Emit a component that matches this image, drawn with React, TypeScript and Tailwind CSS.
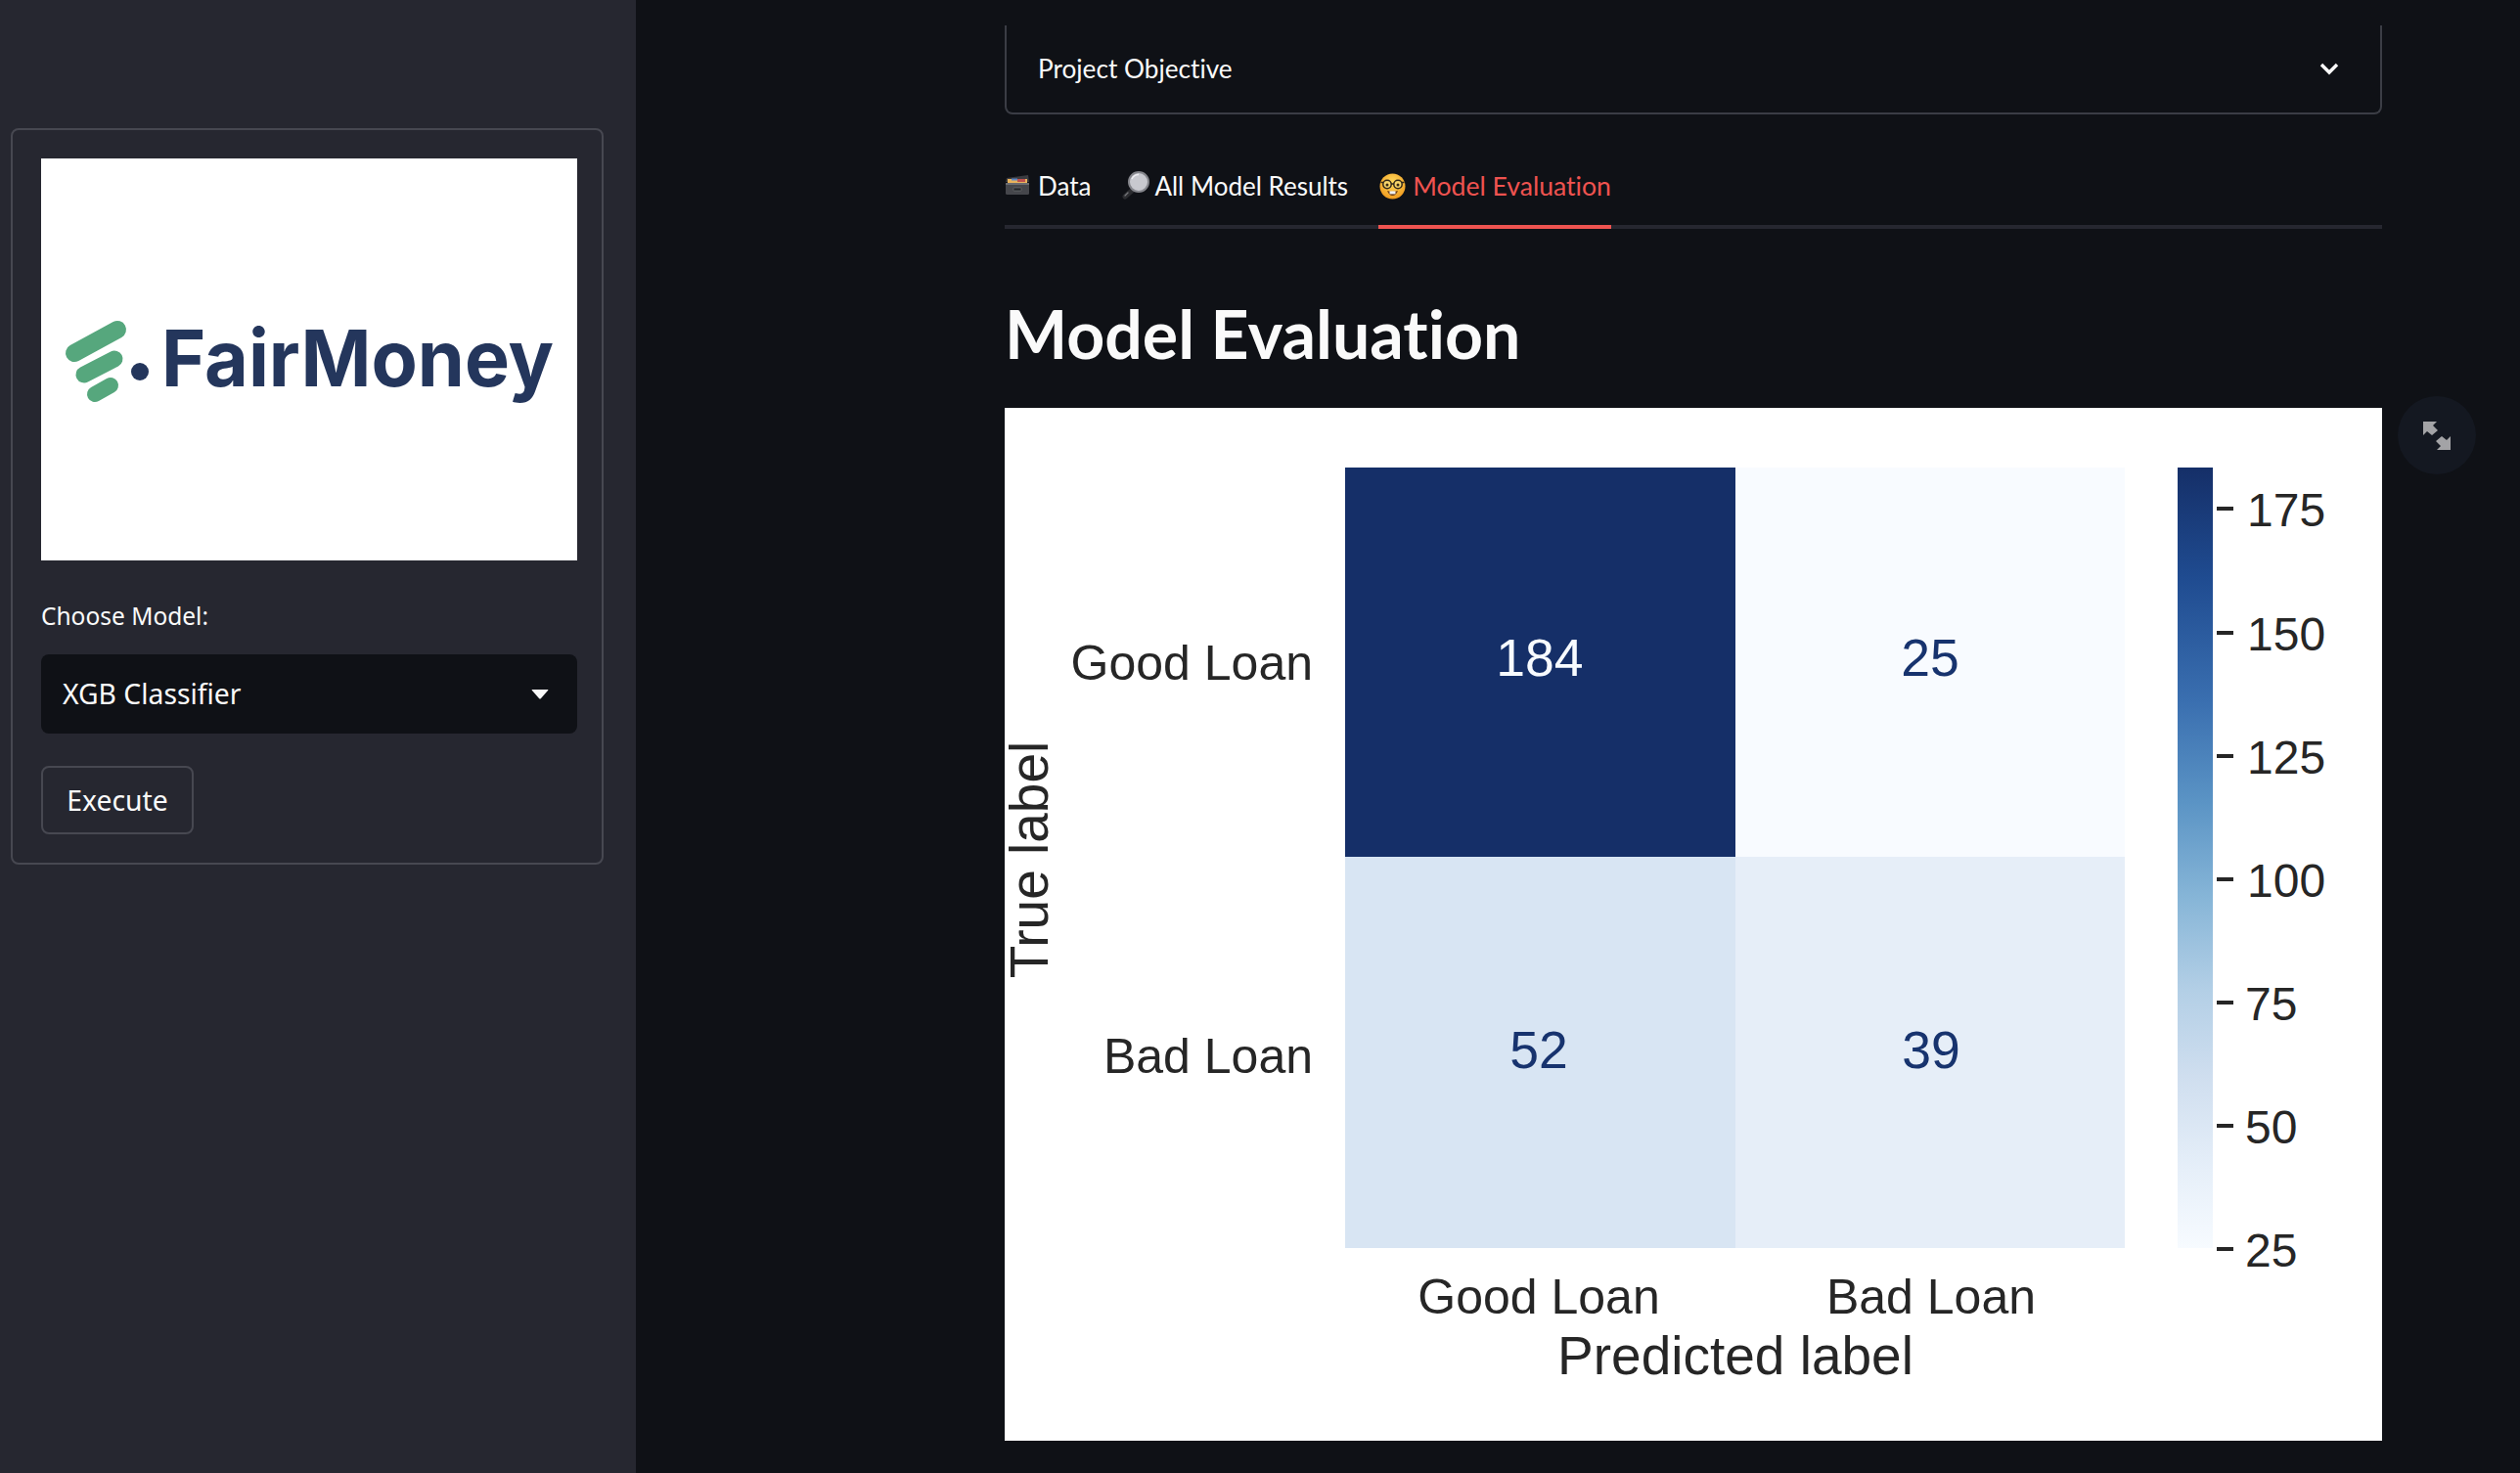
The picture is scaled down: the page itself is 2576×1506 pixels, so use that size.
const sans = "font-['Lato',sans-serif] [font-variant-ligatures:none]";
const ui = "font-['Noto_Sans',sans-serif]";

function FileBoxEmoji() {
  return (
    <svg className="mt-[5px]" width="26" height="22" viewBox="0 0 26 22">
      <path d="M2 4 L24 1 L25 8 L1 8 Z" fill="#3a3b40" />
      <rect x="3" y="5" width="20" height="6" fill="#e9b35c" />
      <rect x="13" y="5" width="8" height="3" fill="#c0504d" />
      <rect x="7" y="4.5" width="6" height="2" fill="#5c86c4" />
      <rect x="1" y="9" width="24" height="12" rx="1.5" fill="#45464b" />
      <rect x="1" y="9" width="24" height="2" fill="#6a6b70" />
      <rect x="9" y="14" width="8" height="3" rx="0.5" fill="#232428" stroke="#77787c" strokeWidth="0.6" />
    </svg>
  );
}

function MagnifierEmoji() {
  return (
    <svg className="mt-[2px]" width="28" height="29" viewBox="0 0 28 29">
      <path d="M11 19 L3 26" stroke="#2b2c30" strokeWidth="5" strokeLinecap="round" />
      <path d="M3 25 L6 22" stroke="#77787c" strokeWidth="1.2" strokeLinecap="round" />
      <circle cx="17" cy="11" r="10" fill="#c8c9cf" stroke="#85868c" strokeWidth="2" />
      <path d="M10 8 A8 8 0 0 1 17 3.5" stroke="#eeeef2" strokeWidth="1.4" fill="none" />
    </svg>
  );
}

function NerdEmoji() {
  return (
    <svg className="mt-[4px]" width="27" height="27" viewBox="0 0 27 27">
      <defs>
        <radialGradient id="nerdFace" cx="50%" cy="35%" r="65%">
          <stop offset="0%" stopColor="#ffdc5e" />
          <stop offset="100%" stopColor="#f09a1e" />
        </radialGradient>
      </defs>
      <circle cx="13.5" cy="13.5" r="13" fill="url(#nerdFace)" />
      <circle cx="8" cy="11.5" r="4.2" fill="#f7d56a" stroke="#33291a" strokeWidth="1.5" />
      <circle cx="19" cy="11.5" r="4.2" fill="#f7d56a" stroke="#33291a" strokeWidth="1.5" />
      <path d="M12 11 H15 M1.5 9.5 H4 M23 9.5 H25.5" stroke="#33291a" strokeWidth="1.3" />
      <circle cx="8" cy="12" r="1.5" fill="#3a2a14" />
      <circle cx="19" cy="12" r="1.5" fill="#3a2a14" />
      <path d="M8 18 Q13.5 20 19 18 Q17 23 13.5 23 Q10 23 8 18 Z" fill="#6b3a14" />
      <rect x="10.5" y="18.4" width="6" height="3" fill="#f2f2f2" />
    </svg>
  );
}

function Logo() {
  return (
    <svg className="h-full w-full" viewBox="0 0 548 411">
      <g stroke="#56a77d" strokeLinecap="round" fill="none">
        <path d="M34 199 L78 175" strokeWidth="18" />
        <path d="M44 221 L75 205" strokeWidth="17" />
        <path d="M55 241 L71 232" strokeWidth="16" />
      </g>
      <circle cx="101" cy="218" r="9" fill="#24365c" />
      <text
        x="123"
        y="233"
        fill="#24365c"
        fontFamily="Inter, sans-serif"
        fontWeight="700"
        fontSize="80"
        textLength="401"
        lengthAdjust="spacingAndGlyphs"
      >
        FairMoney
      </text>
    </svg>
  );
}

const colorbarTicks = [
  { label: "175", y: 103 },
  { label: "150", y: 230 },
  { label: "125", y: 356 },
  { label: "100", y: 482 },
  { label: "75", y: 608 },
  { label: "50", y: 734 },
  { label: "25", y: 860 },
];

function ConfusionMatrix() {
  return (
    <svg
      className="block h-[1056px] w-[1408px] bg-white"
      viewBox="0 0 1408 1056"
      fontFamily="'Liberation Sans', Arial, sans-serif"
      fill="#262626"
    >
      <defs>
        <linearGradient id="blues" x1="0" y1="0" x2="0" y2="1">
          <stop offset="0%" stopColor="#152f68" />
          <stop offset="14%" stopColor="#1f4b90" />
          <stop offset="30%" stopColor="#3a6fb0" />
          <stop offset="43%" stopColor="#5b94c5" />
          <stop offset="55%" stopColor="#86b5d7" />
          <stop offset="67%" stopColor="#b3cfe6" />
          <stop offset="78%" stopColor="#cfdeef" />
          <stop offset="90%" stopColor="#e6eff9" />
          <stop offset="100%" stopColor="#f7fbff" />
        </linearGradient>
      </defs>

      <rect x="348" y="61" width="399" height="398" fill="#152f68" />
      <rect x="747" y="61" width="398" height="398" fill="#f8fbff" />
      <rect x="348" y="459" width="399" height="400" fill="#d8e5f3" />
      <rect x="747" y="459" width="398" height="400" fill="#e6eef8" />

      <g fontSize="53.5" textAnchor="middle" fill="#17336e">
        <text x="547" y="274" fill="#f7fbff">184</text>
        <text x="946" y="274">25</text>
        <text x="546" y="675">52</text>
        <text x="947" y="675">39</text>
      </g>

      <g fontSize="50" textAnchor="end">
        <text x="315" y="278">Good Loan</text>
        <text x="315" y="680">Bad Loan</text>
      </g>
      <g fontSize="50" textAnchor="middle">
        <text x="546" y="926">Good Loan</text>
        <text x="947" y="926">Bad Loan</text>
      </g>
      <text x="747" y="988" fontSize="55" textAnchor="middle">Predicted label</text>
      <text transform="translate(44 462) rotate(-90)" fontSize="55" textAnchor="middle">True label</text>

      <rect x="1199" y="61" width="36" height="798" fill="url(#blues)" />
      {colorbarTicks.map((tick) => (
        <g key={tick.label}>
          <rect x="1239" y={tick.y - 2} width="17" height="4" fill="#262626" />
          <text x={tick.label.length === 3 ? 1270 : 1268} y={tick.y + 18} fontSize="48">
            {tick.label}
          </text>
        </g>
      ))}
    </svg>
  );
}

export default function App() {
  return (
    <div className="flex h-screen overflow-hidden bg-[#0f1116] text-[#fafafa]">
      <aside className={`w-[650px] shrink-0 bg-[#262730] pl-[11px] pr-[33px] pt-[131px] ${ui}`}>
        <div className="h-[753px] rounded-[8px] border-2 border-[#474851] pl-[29px] pr-[25px] pt-[29px]">
          <div className="h-[411px] bg-white">
            <Logo />
          </div>
          <label className="mt-[41px] block text-[24.5px] leading-[32px]">Choose Model:</label>
          <div className="mt-[23px] flex h-[81px] items-center justify-between rounded-[8px] bg-[#0f1116] pl-[22px] pr-[29px]">
            <span className="text-[28.3px]">XGB Classifier</span>
            <svg width="18" height="10" viewBox="0 0 18 10">
              <path d="M1 0 H17 Q18 0 17 1 L10 9 Q9 10 8 9 L1 1 Q0 0 1 0 Z" fill="#fafafa" />
            </svg>
          </div>
          <button
            type="button"
            className="mt-[33px] h-[70px] w-[156px] rounded-[8px] border-2 border-[#474851] bg-[#262730] text-[28.3px]"
          >
            Execute
          </button>
        </div>
      </aside>

      <main className={`ml-[377px] w-[1408px] shrink-0 pt-[26px] ${sans}`}>
        <div className="flex h-[91px] items-center justify-between rounded-b-[8px] border-x-2 border-b-2 border-[#3b3d45] pl-[32px] pr-[42px]">
          <span className="text-[26.2px]">Project Objective</span>
          <svg width="20" height="13" viewBox="0 0 20 13">
            <path d="M2 2 L10 10 L18 2" stroke="#fafafa" strokeWidth="3.4" fill="none" />
          </svg>
        </div>

        <div className="mt-[48px] flex h-[69px] gap-[31px] border-b-4 border-[#262730] text-[26px]">
          <div className="mr-[1px] flex h-[65px] items-start gap-[8px] pt-[8px]">
            <FileBoxEmoji />
            <span className="leading-[34px]">Data</span>
          </div>
          <div className="flex h-[65px] items-start gap-[5px] pt-[8px]">
            <MagnifierEmoji />
            <span className="leading-[34px]">All Model Results</span>
          </div>
          <div className="flex h-[69px] items-start gap-[7px] border-b-4 border-[#ef5350] pl-[1px] pt-[8px] text-[26.6px] text-[#ef5350]">
            <NerdEmoji />
            <span className="leading-[34px]">Model Evaluation</span>
          </div>
        </div>

        <h1 className="mt-[67px] text-[68px] font-bold leading-[80px] text-[#fafafa]">Model Evaluation</h1>

        <div className="relative mt-[36px]">
          <ConfusionMatrix />
          <button
            type="button"
            className="absolute -right-[96px] -top-[12px] flex h-[80px] w-[80px] items-center justify-center rounded-full bg-[#141821]"
          >
            <svg width="28" height="29" viewBox="0 0 28 29">
              <polygon points="0,0 14,0 10,4 15,9 9,14 4,10 0,14" fill="#a3a3a6" />
              <polygon points="28,29 14,29 18,25 13,20 19,15 24,19 28,15" fill="#a3a3a6" />
            </svg>
          </button>
        </div>
      </main>
    </div>
  );
}
